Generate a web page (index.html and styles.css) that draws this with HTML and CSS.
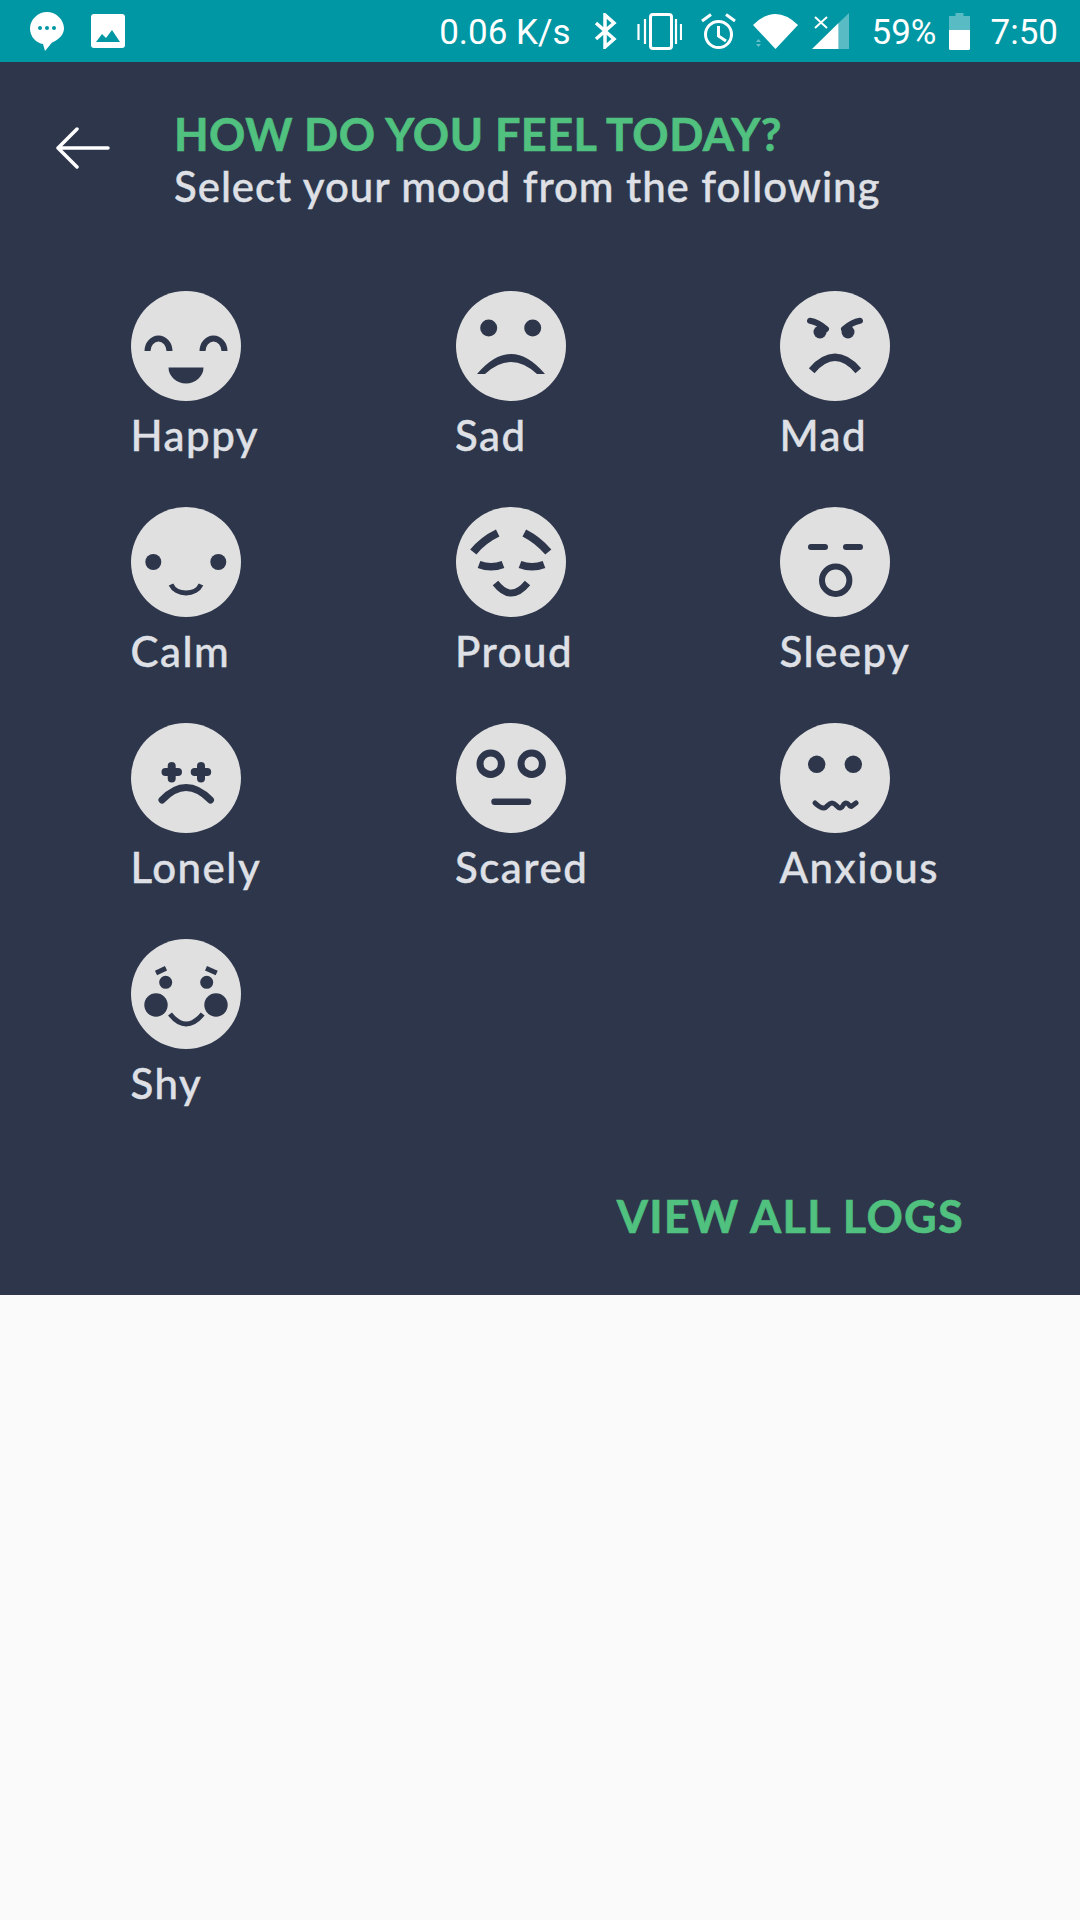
FILE: index.html
```html
<!DOCTYPE html>
<html lang="en">

<head>
  <meta charset="UTF-8"/>
  <meta name="viewport" content="width=device-width, initial-scale=1.0"/>
  <title>Mood</title>
  <link rel="stylesheet" href="styles.css">
</head>

<body>
<div class="status-bar">
  <div class="status-left">
    <svg class="icon-bubble" width="34" height="39" viewBox="0 0 34 39">
      <path fill="#fff" d="M17 0C8 0 0 7.500 0 16.500C0 25 6.500 31 13 32L15 39L22 30.500C28 28 34 23 34 16.500C34 7.500 26 0 17 0Z"/>
      <circle cx="10" cy="16" r="2" fill="#0097a4"/>
      <circle cx="17" cy="16" r="2" fill="#0097a4"/>
      <circle cx="24" cy="16" r="2" fill="#0097a4"/>
    </svg>
    <svg class="icon-image" width="34" height="34" viewBox="0 0 34 34">
      <rect width="34" height="34" rx="3" fill="#fff"/>
      <path fill="#0097a4" d="M5 28L11 20L15 24L21 16L29 28Z"/>
    </svg>
  </div>
  <div class="status-right">
    <span class="status-text speed">0.06 K/s</span>
    <svg class="icon-bt" width="24" height="36" viewBox="0 0 24 36">
      <path fill="none" stroke="#fff" stroke-width="3.500" d="M3 10L21 26L12 34V2L21 10L3 26"/>
    </svg>
    <svg class="icon-vibrate" width="45" height="37" viewBox="0 0 45 37">
      <rect x="13.500" y="1.500" width="21" height="34" rx="2.500" fill="none" stroke="#fff" stroke-width="3"/>
      <path fill="none" stroke="#fff" stroke-width="2.200" d="M8 6V31M1.500 11V27M39 6V31M44 11V27"/>
    </svg>
    <svg class="icon-alarm" width="35" height="36" viewBox="0 0 35 36">
      <circle cx="17.500" cy="21.500" r="13" fill="none" stroke="#fff" stroke-width="3"/>
      <path fill="none" stroke="#fff" stroke-width="3" d="M17.500 13V23L25 28M1 8L10 1.500M34 8L25 1.500"/>
    </svg>
    <svg class="icon-wifi" width="45" height="35" viewBox="0 0 45 35">
      <path fill="#fff" d="M0 11Q22.500 -11 45 11L22.500 35Z"/>
      <path fill="#fff" opacity="0.4" d="M5.500 25L8 28H3ZM3 30H8L5.500 33Z"/>
    </svg>
    <svg class="icon-signal" width="37" height="36" viewBox="0 0 37 36">
      <path fill="#fff" opacity="0.35" d="M37 0V36H26.500V10Z"/>
      <path fill="#fff" d="M26.500 10V36H0Z"/>
      <path fill="none" stroke="#fff" stroke-width="2" d="M3 4L15 15M15 4L3 15"/>
    </svg>
    <span class="status-text percent">59%</span>
    <svg class="icon-battery" width="21" height="37" viewBox="0 0 21 37">
      <path fill="#fff" opacity="0.35" d="M6.500 0H14.500V3H21V17H0V3H6.500Z"/>
      <path fill="#fff" d="M0 17H21V35.500Q21 37 19.500 37H1.500Q0 37 0 35.500Z"/>
    </svg>
    <span class="status-text clock">7:50</span>
  </div>
</div>

<section class="panel">
  <div class="header">
    <svg class="back" width="54" height="42" viewBox="0 0 54 42">
      <path fill="none" stroke="#fff" stroke-width="3.500" stroke-linecap="round" stroke-linejoin="round" d="M52 21H2M21 2L2 21L21 40"/>
    </svg>
    <div>
      <h1 class="title">HOW DO YOU FEEL TODAY?</h1>
      <p class="subtitle">Select your mood from the following</p>
    </div>
  </div>

  <div class="moods">
    <div class="mood">
      <svg class="face" viewBox="0 0 110 110">
        <circle class="skin" cx="55" cy="55" r="55"/>
        <path class="line" stroke-width="6" d="M16.500 60A11 12.500 0 0 1 38.500 60M71.500 60A11 12.500 0 0 1 93.500 60"/>
        <path class="ink" d="M37.500 76.500H72.500A17.500 16 0 0 1 37.500 76.500Z"/>
      </svg>
      <span class="mood-name">Happy</span>
    </div>
    <div class="mood">
      <svg class="face" viewBox="0 0 110 110">
        <circle class="skin" cx="55" cy="55" r="55"/>
        <circle class="ink" cx="32.700" cy="37" r="8.500"/>
        <circle class="ink" cx="76.700" cy="37" r="8.500"/>
        <path class="ink" d="M21 83Q38 63 55 63Q72 63 89 83H81Q68 71 55 71Q42 71 29 83Z"/>
      </svg>
      <span class="mood-name">Sad</span>
    </div>
    <div class="mood">
      <svg class="face" viewBox="0 0 110 110">
        <circle class="skin" cx="55" cy="55" r="55"/>
        <path class="line round" stroke-width="6" d="M30 29.700Q38 31 46 38M80 29.700Q72 31 64 38"/>
        <circle class="ink" cx="40" cy="41" r="6.500"/>
        <circle class="ink" cx="68" cy="41" r="6.500"/>
        <path class="line" stroke-width="7.500" d="M31.700 79.700Q55 53 78.300 79.700"/>
      </svg>
      <span class="mood-name">Mad</span>
    </div>
    <div class="mood">
      <svg class="face" viewBox="0 0 110 110">
        <circle class="skin" cx="55" cy="55" r="55"/>
        <circle class="ink" cx="22.300" cy="55" r="8"/>
        <circle class="ink" cx="87.300" cy="55" r="8"/>
        <path class="line" stroke-width="5" d="M40 77.500A16 13 0 0 0 70 77.500"/>
      </svg>
      <span class="mood-name">Calm</span>
    </div>
    <div class="mood">
      <svg class="face" viewBox="0 0 110 110">
        <circle class="skin" cx="55" cy="55" r="55"/>
        <path class="line" stroke-width="8" d="M17.300 45Q27 33 41.700 26M92.300 45Q82 33 68.300 26"/>
        <path class="line" stroke-width="7.500" d="M23 57.500Q35 62 47 57.500M64 57.500Q76 62 88 57.500"/>
        <path class="line" stroke-width="7" d="M39.500 76Q55 96 71.500 76"/>
      </svg>
      <span class="mood-name">Proud</span>
    </div>
    <div class="mood">
      <svg class="face" viewBox="0 0 110 110">
        <circle class="skin" cx="55" cy="55" r="55"/>
        <path class="line round" stroke-width="6" d="M31 40H45M66 40H80"/>
        <circle class="line" stroke-width="6" cx="55.700" cy="73.300" r="13.700"/>
      </svg>
      <span class="mood-name">Sleepy</span>
    </div>
    <div class="mood">
      <svg class="face" viewBox="0 0 110 110">
        <circle class="skin" cx="55" cy="55" r="55"/>
        <path class="line round" stroke-width="8" d="M34.500 49H47M40.700 43V55.500M63.700 49H76.200M70 43V55.500"/>
        <path class="line round" stroke-width="7" d="M31 77Q55 52 79.500 77"/>
      </svg>
      <span class="mood-name">Lonely</span>
    </div>
    <div class="mood">
      <svg class="face" viewBox="0 0 110 110">
        <circle class="skin" cx="55" cy="55" r="55"/>
        <circle class="line" stroke-width="7" cx="34.700" cy="40.700" r="10.700"/>
        <circle class="line" stroke-width="7" cx="75.700" cy="40.700" r="10.700"/>
        <path class="line round" stroke-width="6.500" d="M38.500 78.700H72"/>
      </svg>
      <span class="mood-name">Scared</span>
    </div>
    <div class="mood">
      <svg class="face" viewBox="0 0 110 110">
        <circle class="skin" cx="55" cy="55" r="55"/>
        <circle class="ink" cx="36.700" cy="41.300" r="8.700"/>
        <circle class="ink" cx="73.300" cy="41.300" r="8.700"/>
        <path class="line round" stroke-width="5" d="M35 80C38 83 41 85 44 85S48 80 52 80S57 85 60 85S63 80 66 80S70 85 72 83L76 80"/>
      </svg>
      <span class="mood-name">Anxious</span>
    </div>
    <div class="mood">
      <svg class="face" viewBox="0 0 110 110">
        <circle class="skin" cx="55" cy="55" r="55"/>
        <path class="line" stroke-width="5" d="M25 34L35 29.300M75 29.300L85.700 34"/>
        <circle class="ink" cx="34.700" cy="43.300" r="6.500"/>
        <circle class="ink" cx="75.700" cy="43.300" r="6.500"/>
        <circle class="ink" cx="25" cy="66" r="11.700"/>
        <circle class="ink" cx="85" cy="66" r="11.700"/>
        <path class="line" stroke-width="5" d="M39 75Q55 95 71.700 75"/>
      </svg>
      <span class="mood-name">Shy</span>
    </div>
  </div>

  <div class="logs-row">
    <span class="logs">VIEW ALL LOGS</span>
  </div>
</section>
</body>

</html>
```

FILE: styles.css
```css
* {
  box-sizing: border-box;
}

body {
  margin: 0;
  min-height: 1920px;
  background: #fafafa;
  font-family: 'Lato', sans-serif;
}

.status-bar {
  display: flex;
  justify-content: space-between;
  align-items: center;
  height: 62px;
  background: #0097a4;
  padding: 0 22px 0 30px;
}

.status-left,
.status-right {
  display: flex;
  align-items: center;
}

.icon-bubble {
  margin-top: 1px;
}

.icon-image {
  margin-left: 27px;
}

.status-text {
  color: #fff;
  font-family: 'Roboto', sans-serif;
  font-size: 35px;
  line-height: 62px;
  padding-top: 4px;
}

.icon-bt {
  margin-left: 22px;
}

.icon-vibrate {
  margin-left: 20px;
}

.icon-alarm {
  margin-left: 19px;
}

.icon-wifi {
  margin-left: 17px;
}

.icon-signal {
  margin-left: 14px;
}

.percent {
  margin-left: 23px;
}

.icon-battery {
  margin-left: 12px;
}

.clock {
  margin-left: 21px;
}

.panel {
  background: #2e364b;
  height: 1233px;
  padding-top: 47px;
}

.header {
  display: flex;
  align-items: flex-start;
  padding-left: 56px;
}

.back {
  margin: 18px 64px 0 0;
  flex: none;
}

.title {
  margin: 0;
  color: #50c17f;
  font-size: 45px;
  font-weight: 700;
  letter-spacing: 0.45px;
  -webkit-text-stroke: 0.6px #50c17f;
  line-height: 51px;
  white-space: nowrap;
}

.subtitle {
  margin: 0;
  color: #dfe0e6;
  font-size: 42px;
  font-weight: 500;
  letter-spacing: 0.95px;
  -webkit-text-stroke: 0.4px #dfe0e6;
  line-height: 52px;
  white-space: nowrap;
}

.moods {
  display: grid;
  grid-template-columns: repeat(3, 324.5px);
  grid-auto-rows: 216px;
  padding-left: 131px;
  margin-top: 79px;
}

.mood {
  display: flex;
  flex-direction: column;
  align-items: flex-start;
}

.face {
  width: 110px;
  height: 110px;
  display: block;
}

.skin {
  fill: #e0e0e0;
}

.ink {
  fill: #2e364b;
}

.line {
  fill: none;
  stroke: #2e364b;
}

.round {
  stroke-linecap: round;
}

.mood-name {
  color: #dfe0e6;
  font-size: 42px;
  font-weight: 500;
  letter-spacing: 1.5px;
  -webkit-text-stroke: 0.4px #dfe0e6;
  line-height: 50px;
  margin: 9px 0 0 -0.5px;
}

.logs-row {
  display: flex;
  justify-content: flex-end;
  padding-right: 116px;
  margin-top: 35px;
}

.logs {
  color: #50c17f;
  font-size: 45px;
  font-weight: 700;
  letter-spacing: 1.3px;
  -webkit-text-stroke: 0.6px #50c17f;
  line-height: 52px;
}
```
